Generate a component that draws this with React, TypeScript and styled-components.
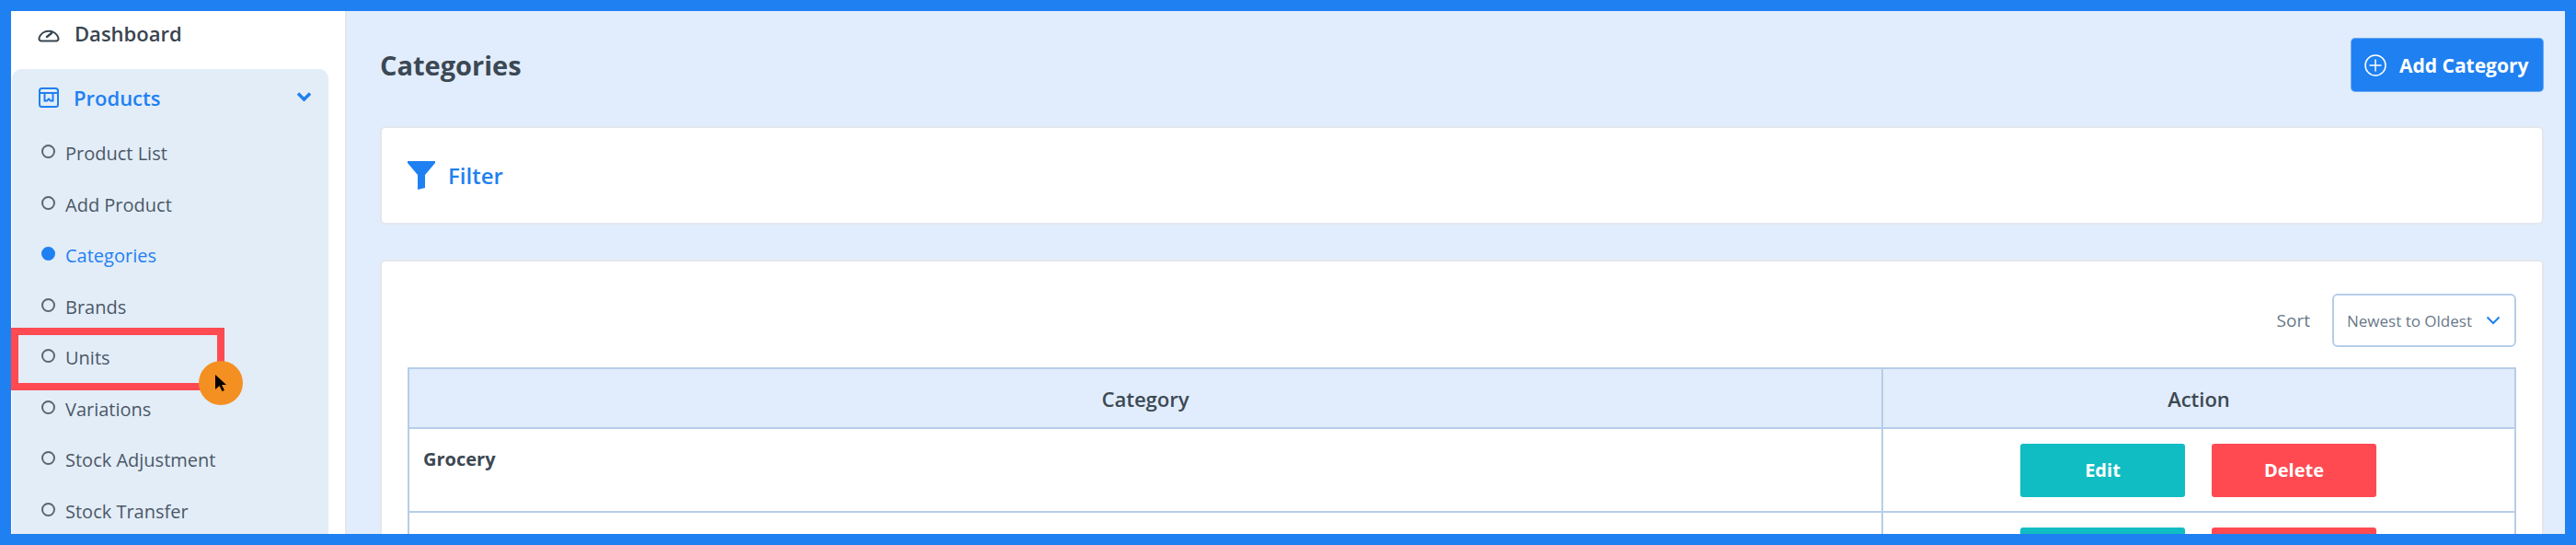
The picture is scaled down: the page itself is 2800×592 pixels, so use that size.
import styled, { createGlobalStyle } from 'styled-components';

const GlobalStyle = createGlobalStyle`
  html, body {
    margin: 0;
    padding: 0;
    background: #ffffff;
  }
  * {
    box-sizing: border-box;
  }
`;

const Frame = styled.div`
  position: relative;
  width: 2800px;
  height: 592px;
  display: flex;
  border: 12px solid #1f80f1;
  overflow: hidden;
  font-family: "Open Sans", "Noto Sans", sans-serif;
  color: #3d4a58;
`;

const Sidebar = styled.aside`
  width: 365px;
  flex-shrink: 0;
  background: #ffffff;
  border-right: 2px solid #e3e7ed;
  padding: 0 18px 0 1px;
`;

const NavHead = styled.div<{ $active?: boolean }>`
  display: flex;
  align-items: center;
  height: ${(p) => (p.$active ? '64px' : '63px')};
  padding: ${(p) => (p.$active ? '0 18px 3px 29px' : '0 0 15px 28px')};
  font-size: 22px;
  font-weight: 600;
  color: ${(p) => (p.$active ? '#1f80f1' : '#38444f')};

  svg {
    flex-shrink: 0;
    margin-right: 16px;
  }
`;

const Chevron = styled.svg`
  margin: -1px 0 0 auto !important;
`;

const Group = styled.div`
  background: #e3edf8;
  border-radius: 10px;
  height: 560px;
`;

const SubItem = styled.div<{ $active?: boolean }>`
  display: flex;
  align-items: center;
  height: 55.5px;
  padding-left: 32px;
  font-size: 20px;
  color: ${(p) => (p.$active ? '#1f80f1' : '#4b5866')};
`;

const Dot = styled.span<{ $active?: boolean }>`
  width: 15px;
  height: 15px;
  margin: -4px 11px 0 0;
  border-radius: 50%;
  border: 2px solid ${(p) => (p.$active ? '#1f80f1' : '#5b6673')};
  background: ${(p) => (p.$active ? '#1f80f1' : 'transparent')};
`;

const Highlight = styled.div`
  position: absolute;
  left: 0;
  top: 344px;
  width: 232px;
  height: 68px;
  border: 8px solid #ff4a52;
`;

const CursorBadge = styled.div`
  position: absolute;
  left: 204px;
  top: 380px;
  width: 48px;
  height: 48px;
  display: flex;
  align-items: center;
  justify-content: center;
  border-radius: 50%;
  background: #f39021;
`;

const Main = styled.main`
  flex: 1;
  background: #e1edfc;
  padding: 29px 23px 0 36px;
`;

const TitleRow = styled.div`
  display: flex;
  align-items: center;
  justify-content: space-between;
  margin-bottom: 37px;
`;

const Title = styled.h1`
  margin: 0;
  font-size: 29px;
  font-weight: 700;
  color: #3c4853;
`;

const AddButton = styled.button`
  display: flex;
  align-items: center;
  gap: 14px;
  width: 210px;
  height: 59px;
  padding: 0 0 0 14px;
  border: 1px solid #ffffff55;
  border-radius: 5px;
  background: #1f80f1;
  color: #ffffff;
  font-family: inherit;
  font-size: 21px;
  font-weight: 700;
`;

const Card = styled.section`
  background: #ffffff;
  border: 2px solid #e3e7ed;
  border-radius: 6px;
`;

const FilterCard = styled(Card)`
  display: flex;
  align-items: center;
  gap: 14px;
  height: 107px;
  padding: 0 0 0 28px;
  margin-bottom: 38px;
  font-size: 24px;
  font-weight: 600;
  color: #1f80f1;
`;

const TableCard = styled(Card)`
  padding: 35px 28px 0;
  height: 320px;
`;

const SortRow = styled.div`
  display: flex;
  justify-content: flex-end;
  align-items: center;
  gap: 24px;
  margin-bottom: 22px;
  font-size: 19px;
  color: #6a7889;
`;

const SortSelect = styled.div`
  display: flex;
  align-items: center;
  justify-content: space-between;
  width: 200px;
  height: 58px;
  padding: 0 15px 0 14px;
  border: 2px solid #b7cde9;
  border-radius: 6px;
  font-size: 17px;
`;

const Table = styled.table`
  width: 100%;
  table-layout: fixed;
  border-collapse: collapse;

  th, td {
    border: 2px solid #b7cde9;
  }
`;

const HeadCell = styled.th<{ $width?: string }>`
  width: ${(p) => p.$width ?? 'auto'};
  height: 65px;
  background: #e1edfc;
  font-size: 22px;
  font-weight: 600;
  color: #3c4853;
`;

const NameCell = styled.td`
  height: 91px;
  padding: 0 0 24px 15px;
  font-size: 20px;
  font-weight: 700;
  color: #3c4853;
`;

const ActionCell = styled.td`
  height: 91px;
  padding: 0;
`;

const Actions = styled.div`
  display: flex;
  justify-content: center;
  gap: 29px;
  padding-right: 1px;
`;

const ActionButton = styled.button<{ $kind: 'edit' | 'delete' }>`
  width: 179px;
  height: 58px;
  border: 0;
  border-radius: 3px;
  background: ${(p) => (p.$kind === 'edit' ? '#10bdc3' : '#ff4a52')};
  color: #ffffff;
  font-family: inherit;
  font-size: 20px;
  font-weight: 700;
`;

const subItems = ['Product List', 'Add Product', 'Categories', 'Brands', 'Units', 'Variations', 'Stock Adjustment', 'Stock Transfer'];

export default function App() {
  return (
    <>
      <GlobalStyle />
      <Frame>
        <Sidebar>
          <NavHead>
            <svg width="24" height="20" viewBox="0 0 24 20" fill="none" stroke="#38444f" strokeWidth="2">
              <path d="M3.5 18.500h17a2.500 2.500 0 0 0 2-3A11 11 0 0 0 1.500 15.500a2.500 2.500 0 0 0 2 3z" />
              <path d="M10 14l5-4" strokeLinecap="round" strokeWidth="2.500" />
            </svg>
            Dashboard
          </NavHead>
          <Group>
            <NavHead $active>
              <svg width="22" height="22" viewBox="0 0 22 22" fill="none" stroke="#1f80f1" strokeWidth="2">
                <rect x="1" y="1" width="20" height="20" rx="2.500" />
                <path d="M1 6h20" />
                <path d="M6.500 6v8.500h2.500l2-2 2 2h2.500V6" />
              </svg>
              Products
              <Chevron width="17" height="12" viewBox="0 0 17 12" fill="none" stroke="#1f80f1" strokeWidth="3.500">
                <path d="M2 2.500l6.500 6.500 6.500-6.500" />
              </Chevron>
            </NavHead>
            {subItems.map((item) => (
              <SubItem key={item} $active={item === 'Categories'}>
                <Dot $active={item === 'Categories'} />
                {item}
              </SubItem>
            ))}
          </Group>
        </Sidebar>
        <Main>
          <TitleRow>
            <Title>Categories</Title>
            <AddButton>
              <svg width="24" height="24" viewBox="0 0 24 24" fill="none" stroke="#ffffff" strokeWidth="1.500">
                <circle cx="12" cy="12" r="11" />
                <path d="M12 5.500v13M5.500 12h13" />
              </svg>
              Add Category
            </AddButton>
          </TitleRow>
          <FilterCard>
            <svg width="30" height="31" viewBox="0 0 30 31" fill="#1f80f1">
              <path d="M0 0h30v2L19 15v14l-8 2V15L0 2z" />
            </svg>
            Filter
          </FilterCard>
          <TableCard>
            <SortRow>
              Sort
              <SortSelect>
                Newest to Oldest
                <svg width="16" height="10" viewBox="0 0 16 10" fill="none" stroke="#1f80f1" strokeWidth="2">
                  <path d="M1.500 1.500L8 8l6.500-6.500" />
                </svg>
              </SortSelect>
            </SortRow>
            <Table>
              <thead>
                <tr>
                  <HeadCell>Category</HeadCell>
                  <HeadCell $width="688px">Action</HeadCell>
                </tr>
              </thead>
              <tbody>
                <tr>
                  <NameCell>Grocery</NameCell>
                  <ActionCell>
                    <Actions>
                      <ActionButton $kind="edit">Edit</ActionButton>
                      <ActionButton $kind="delete">Delete</ActionButton>
                    </Actions>
                  </ActionCell>
                </tr>
                {/* next row runs off the bottom of the shot, only the button tops show */}
                <tr>
                  <NameCell />
                  <ActionCell>
                    <Actions>
                      <ActionButton $kind="edit" />
                      <ActionButton $kind="delete" />
                    </Actions>
                  </ActionCell>
                </tr>
              </tbody>
            </Table>
          </TableCard>
        </Main>
        <Highlight />
        <CursorBadge>
          <svg width="14" height="18" viewBox="0 0 14 18" fill="#000000">
            <path d="M1 0l12 11H8l3 6-2.500 1-3-6L1 16z" />
          </svg>
        </CursorBadge>
      </Frame>
    </>
  );
}
